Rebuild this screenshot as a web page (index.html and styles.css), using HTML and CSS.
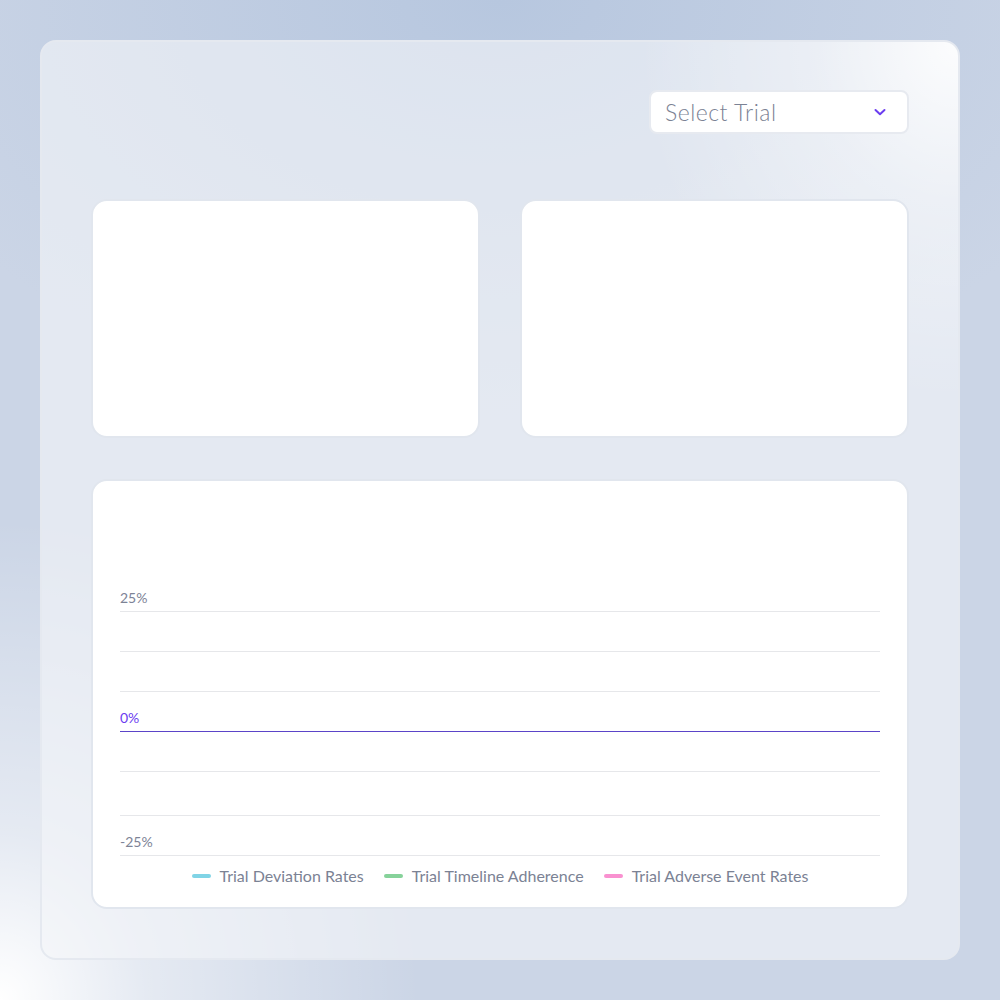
FILE: index.html
```html
<!DOCTYPE html>
<html lang="en">
<head>
<meta charset="utf-8">
<title>Trials</title>
<link rel="stylesheet" href="styles.css">
</head>
<body>
<div class="panel">
  <div class="toolbar">
    <div class="select">
      <span class="select-text">Select Trial</span>
      <svg class="chev" width="14" height="10" viewBox="0 0 14 10"><path d="M2.5 3 L7 7.2 L11.5 3" fill="none" stroke="#6b3df0" stroke-width="2" stroke-linecap="round" stroke-linejoin="round"/></svg>
    </div>
  </div>
  <div class="cards">
    <div class="card"></div>
    <div class="card"></div>
  </div>
  <div class="chart-card">
    <div class="chart">
      <div class="row r40"><span class="lbl">25%</span></div>
      <div class="row r40"></div>
      <div class="row r40"></div>
      <div class="row r40 zero"><span class="lbl zero-lbl">0%</span></div>
      <div class="row r40"></div>
      <div class="row r44"></div>
      <div class="row r40"><span class="lbl">-25%</span></div>
    </div>
    <div class="legend">
      <div class="item"><span class="sw cyan"></span>Trial Deviation Rates</div>
      <div class="item"><span class="sw green"></span>Trial Timeline Adherence</div>
      <div class="item"><span class="sw pink"></span>Trial Adverse Event Rates</div>
    </div>
  </div>
</div>
</body>
</html>
```
FILE: styles.css
```css
* { box-sizing: border-box; }
html, body { margin: 0; height: 100%; }
body {
  width: 1000px;
  height: 1000px;
  padding: 40px;
  font-family: "Lato", "Inter", sans-serif;
  background:
    radial-gradient(ellipse 420px 480px at 0% 100%, rgba(255,255,255,1) 0%, rgba(255,255,255,0.5) 35%, rgba(255,255,255,0) 100%),
    radial-gradient(ellipse 650px 420px at 50% 0%, #b7c7df, rgba(183,199,223,0) 100%),
    #cbd5e6;
}
.panel {
  width: 920px;
  height: 920px;
  border: 2px solid #e5e9f0;
  border-radius: 16px;
  padding: 48px 49px 49px 49px;
  display: flex;
  flex-direction: column;
  background:
    radial-gradient(ellipse 320px 360px at 100% 0%, rgba(255,255,255,0.9) 0%, rgba(255,255,255,0.35) 45%, rgba(255,255,255,0) 100%),
    rgba(243,245,249,0.62);
}
.toolbar {
  display: flex;
  justify-content: flex-end;
  height: 44px;
}
.select {
  width: 260px;
  height: 44px;
  background: #fff;
  border: 2px solid #e7eaf0;
  border-radius: 8px;
  display: flex;
  align-items: center;
  justify-content: space-between;
  padding: 0 20px 0 14px;
}
.select-text {
  font-size: 23px;
  font-weight: 300;
  color: #7b8294;
  letter-spacing: 0.5px;
}
.chev { display: block; }
.cards {
  margin-top: 65px;
  display: flex;
  gap: 40px;
}
.card {
  flex: 1;
  height: 239px;
  background: #fff;
  border: 2px solid #e1e6ee;
  border-radius: 16px;
}
.chart-card {
  margin-top: 41px;
  flex: 1;
  background: #fff;
  border: 2px solid #e1e6ee;
  border-radius: 16px;
  padding: 91px 27px 0 27px;
  display: flex;
  flex-direction: column;
}
.chart { display: flex; flex-direction: column; }
.row {
  border-bottom: 1px solid #e6e7ea;
  display: flex;
  align-items: flex-end;
  padding-bottom: 5px;
}
.r40 { height: 40px; }
.r44 { height: 44px; }
.row.zero { border-bottom: 1px solid #5b44c8; }
.lbl {
  font-size: 14px;
  line-height: 16px;
  color: #7d8396;
}
.zero-lbl { color: #6b3df0; }
.legend {
  margin-top: 10px;
  display: flex;
  justify-content: center;
  gap: 20px;
  font-size: 16px;
  color: #7b8294;
  line-height: 20px;
}
.item { display: flex; align-items: center; gap: 9px; }
.sw { width: 19px; height: 4px; border-radius: 2px; display: block; }
.cyan { background: #80d4e6; }
.green { background: #86d29a; }
.pink { background: #f991d0; }
```
